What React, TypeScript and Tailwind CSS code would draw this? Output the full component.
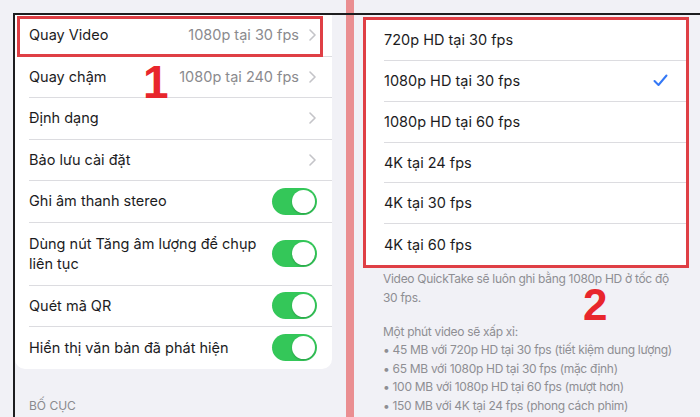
import React from "react";

const FONT = { fontFamily: 'Inter, "Noto Sans", sans-serif' };

function Chevron() {
  return (
    <svg width="7" height="12" viewBox="0 0 7 12" className="shrink-0">
      <path d="M1 1 L6 6 L1 11" fill="none" stroke="#c4c4c8" strokeWidth="1.6" strokeLinecap="round" strokeLinejoin="round" />
    </svg>
  );
}

function Toggle() {
  return (
    <div className="w-[45px] h-[27px] rounded-full bg-[#34c759] flex items-center justify-end pr-[2px] shrink-0">
      <div className="w-[23px] h-[23px] rounded-full bg-white shadow-[0_1px_2px_rgba(0,0,0,0.2)]" />
    </div>
  );
}

function Row({
  children,
  right,
  last,
  tall,
}: {
  children: React.ReactNode;
  right?: React.ReactNode;
  last?: boolean;
  tall?: boolean;
}) {
  return (
    <div className={`flex pl-[14px] ${tall ? "h-[63px]" : "h-[41.5px]"}`}>
      <div
        className={`flex-1 flex items-center justify-between pr-[15px] ${last ? "" : "border-b border-[#dcdce0]"}`}
      >
        <div className="text-[14.5px] text-[#1c1c1e] leading-[20px]">{children}</div>
        {right}
      </div>
    </div>
  );
}

function Value({ text }: { text?: string }) {
  return (
    <div className="flex items-center gap-[10px] pr-[1px]">
      {text && <span className="text-[14.5px] text-[#8a8a8e]">{text}</span>}
      <Chevron />
    </div>
  );
}

function Option({ text, checked, last }: { text: string; checked?: boolean; last?: boolean }) {
  return (
    <div className="flex pl-[18px] h-[41px]">
      <div
        className={`flex-1 flex items-center justify-between pr-[18px] ${last ? "" : "border-b border-[#dcdce0]"}`}
      >
        <span className="text-[14.5px] text-[#1c1c1e]">{text}</span>
        {checked && (
          <svg width="15" height="13" viewBox="0 0 15 13">
            <path d="M1.5 7 L5.5 11 L13.5 1.5" fill="none" stroke="#3478f6" strokeWidth="2" strokeLinecap="round" strokeLinejoin="round" />
          </svg>
        )}
      </div>
    </div>
  );
}

export default function App() {
  return (
    <div className="relative w-[700px] h-[417px] overflow-hidden bg-[#f1f1f6] flex" style={FONT}>
      {/* Left panel */}
      <div className="w-[346px] shrink-0 pt-[15px] pl-[15px]">
        <div className="relative w-[317px] bg-white rounded-b-[10px]">
          <Row right={<Value text="1080p tại 30 fps" />}>Quay Video</Row>
          <Row right={<Value text="1080p tại 240 fps" />}>Quay chậm</Row>
          <Row right={<Value />}>Định dạng</Row>
          <Row right={<Value />}>Bảo lưu cài đặt</Row>
          <Row right={<Toggle />}>Ghi âm thanh stereo</Row>
          <Row tall right={<Toggle />}>
            Dùng nút Tăng âm lượng để chụp
            <br />
            liên tục
          </Row>
          <Row right={<Toggle />}>Quét mã QR</Row>
          <Row last right={<Toggle />}>Hiển thị văn bản đã phát hiện</Row>

          {/* annotation box 1 */}
          <div className="absolute left-[2px] top-[1px] w-[306px] h-[41px] border-[3px] border-[#df3f45]" />
          <div
            className="absolute left-[128px] top-[44px] text-[46px] font-bold leading-none text-[#e8262c]"
            style={{ fontFamily: '"Liberation Sans", Arial, sans-serif' }}
          >
            1
          </div>
        </div>
        <div className="mt-[29px] pl-[14px] text-[12px] leading-[16px] text-[#8a8a8e] uppercase">Bố cục</div>
      </div>

      {/* pink divider */}
      <div className="w-[8px] shrink-0 bg-[#ea8e91]" />

      {/* Right panel */}
      <div className="relative flex-1 pt-[17px] pl-[9px]">
        <div className="w-[326px] h-[251px] border-[3px] border-[#df3f45] bg-white flex flex-col justify-center">
          <Option text="720p HD tại 30 fps" />
          <Option text="1080p HD tại 30 fps" checked />
          <Option text="1080p HD tại 60 fps" />
          <Option text="4K tại 24 fps" />
          <Option text="4K tại 30 fps" />
          <Option text="4K tại 60 fps" last />
        </div>
        <div className="pl-[20px] mt-[2px] text-[12px] tracking-[-0.3px] whitespace-nowrap leading-[18.5px] text-[#8e8e93]">
          <p>
            Video QuickTake sẽ luôn ghi bằng 1080p HD ở tốc độ
            <br />
            30 fps.
          </p>
          <p className="mt-[15.5px]">Một phút video sẽ xấp xỉ:</p>
          <p>• 45 MB với 720p HD tại 30 fps (tiết kiệm dung lượng)</p>
          <p>• 65 MB với 1080p HD tại 30 fps (mặc định)</p>
          <p>• 100 MB với 1080p HD tại 60 fps (mượt hơn)</p>
          <p>• 150 MB với 4K tại 24 fps (phong cách phim)</p>
        </div>
        <div
          className="absolute left-[229px] top-[283px] text-[44px] font-bold leading-none text-[#e8262c]"
          style={{ fontFamily: '"Liberation Sans", Arial, sans-serif' }}
        >
          2
        </div>
      </div>

      {/* black annotation lines */}
      <div className="absolute left-[13px] right-0 top-[13px] h-[2px] bg-[#1d1d1f]" />
      <div className="absolute left-[13px] top-[13px] bottom-0 w-[2px] bg-[#1d1d1f]" />
    </div>
  );
}
